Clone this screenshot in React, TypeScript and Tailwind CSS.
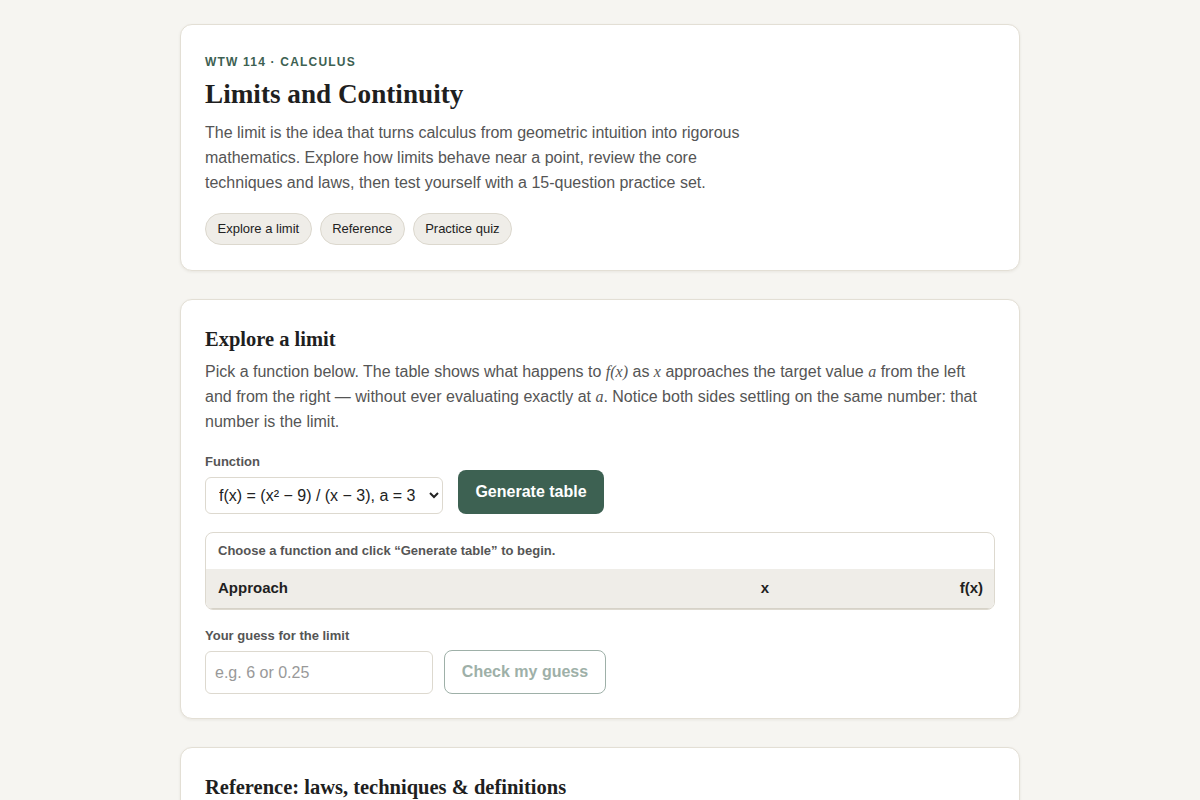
import { useState } from "react";

const sans = "font-['Liberation_Sans',Arial,sans-serif]";
const serif = "font-['Liberation_Serif','Times_New_Roman',serif]";

const FUNCTIONS = [
  "f(x) = (x² − 9) / (x − 3), a = 3",
  "f(x) = sin(x) / x, a = 0",
  "f(x) = (√(x+4) − 2) / x, a = 0",
];

function Card({ children, className = "" }: { children: React.ReactNode; className?: string }) {
  return (
    <section
      className={`rounded-xl border border-[#e3dfd5] bg-white px-6 shadow-[0_1px_3px_rgba(60,50,30,0.08)] ${className}`}
    >
      {children}
    </section>
  );
}

function Em({ children }: { children: React.ReactNode }) {
  return <i className={`${serif} text-[16px]`}>{children}</i>;
}

export default function App() {
  const [fn, setFn] = useState(FUNCTIONS[0]);
  const [guess, setGuess] = useState("");

  return (
    <div className={`min-h-screen bg-[#f6f5f1] ${sans} text-[#222]`}>
      <main className="mx-auto flex max-w-[840px] flex-col gap-7 pt-6 pb-10">
        <Card className="pt-[29px] pb-[25px]">
          <p className="text-[12px] leading-4 font-bold tracking-[0.1em] text-[#3d6152]">
            WTW 114 · CALCULUS
          </p>
          <h1 className={`${serif} mt-[7px] text-[27.2px] leading-[34px] font-bold text-[#1f1f1f]`}>
            Limits and Continuity
          </h1>
          <p className="mt-[9px] max-w-[550px] text-[16px] leading-[25px] text-[#555]">
            The limit is the idea that turns calculus from geometric intuition into rigorous
            mathematics. Explore how limits behave near a point, review the core techniques and
            laws, then test yourself with a 15-question practice set.
          </p>
          <nav className="mt-[18px] flex gap-2">
            {["Explore a limit", "Reference", "Practice quiz"].map((t) => (
              <a
                key={t}
                href="#"
                className="flex h-8 items-center rounded-full border border-[#dcd8ce] bg-[#efede8] px-[11.5px] text-[13px] text-[#222]"
              >
                {t}
              </a>
            ))}
          </nav>
        </Card>

        <Card className="pt-[25px] pb-6">
          <h2 className={`${serif} text-[20.5px] leading-[28px] font-bold text-[#1f1f1f]`}>
            Explore a limit
          </h2>
          <p className="mt-[6px] text-[16px] leading-[25px] text-[#555]">
            Pick a function below. The table shows what happens to <Em>f(x)</Em> as <Em>x</Em>{" "}
            approaches the target value <Em>a</Em> from the left and from the right — without ever
            evaluating exactly at <Em>a</Em>. Notice both sides settling on the same number: that
            number is the limit.
          </p>

          <div className="mt-5 flex items-end gap-[15px]">
            <div className="flex flex-col gap-[7px]">
              <label className="text-[13px] leading-4 font-bold text-[#555]">Function</label>
              <select
                value={fn}
                onChange={(e) => setFn(e.target.value)}
                className="h-[37px] w-[238px] rounded-md border border-[#ddd9cf] bg-white pr-1 pl-[9px] text-[16px] text-[#222]"
              >
                {FUNCTIONS.map((f) => (
                  <option key={f}>{f}</option>
                ))}
              </select>
            </div>
            <button className="h-11 w-[146px] rounded-lg bg-[#3d6152] text-[16px] font-bold text-white">
              Generate table
            </button>
          </div>

          <div className="mt-[18px] overflow-hidden rounded-lg border border-[#ddd9cf]">
            <p className="px-3 pt-[10px] pb-[10px] text-[13px] leading-4 font-bold text-[#555]">
              Choose a function and click “Generate table” to begin.
            </p>
            <div className="grid h-10 grid-cols-[1fr_214px_214px] items-center border-b border-[#d6d2c8] bg-[#efede8] text-[15px] font-bold text-[#1f1f1f]">
              <span className="px-3">Approach</span>
              <span className="pr-[11px] pl-3 text-right">x</span>
              <span className="pr-[11px] pl-3 text-right">f(x)</span>
            </div>
          </div>

          <div className="mt-[18px] flex flex-col gap-[6px]">
            <label className="text-[13px] leading-4 font-bold text-[#555]">
              Your guess for the limit
            </label>
            <div className="flex items-end gap-[11px]">
              <input
                value={guess}
                onChange={(e) => setGuess(e.target.value)}
                placeholder="e.g. 6 or 0.25"
                className="h-[43px] w-[228px] rounded-md border border-[#ddd9cf] bg-white px-[9px] text-[16px] placeholder:text-[#999]"
              />
              <button
                disabled
                className="h-11 w-[162px] rounded-lg border border-[#9eb0a8] bg-white text-[16px] font-bold text-[#9eb0a8]"
              >
                Check my guess
              </button>
            </div>
          </div>
        </Card>

        <Card className="pt-[25px] pb-6">
          <h2 className={`${serif} text-[20.5px] leading-[28px] font-bold text-[#1f1f1f]`}>
            Reference: laws, techniques &amp; definitions
          </h2>
          <p className="mt-[6px] text-[16px] leading-[25px] text-[#555]">
            The limit laws let you break complicated limits into simpler pieces.
          </p>
        </Card>
      </main>
    </div>
  );
}
